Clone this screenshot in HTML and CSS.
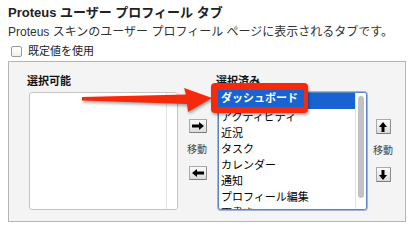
FILE: index.html
```html
<!DOCTYPE html>
<html lang="ja">
<head>
<meta charset="utf-8">
<title>Proteus ユーザー プロフィール タブ</title>
<link rel="stylesheet" href="styles.css">
</head>
<body>
<div class="page">
  <h2 class="title">Proteus ユーザー プロフィール タブ</h2>
  <p class="desc">Proteus スキンのユーザー プロフィール ページに表示されるタブです。</p>
  <label class="default-row"><input type="checkbox" class="chk"><span>既定値を使用</span></label>
  <div class="panel">
    <div class="col">
      <div class="col-label">選択可能</div>
      <div class="listbox">
        <div class="items"></div>
        <div class="track"></div>
      </div>
    </div>
    <div class="mover mover-lr">
      <button class="btn btn-wide" type="button"><svg width="12" height="8" viewBox="0 0 12 8"><polygon points="0,2.5 7,2.5 7,0 12,4 7,8 7,5.5 0,5.5" fill="#000"/></svg></button>
      <span class="move-label">移動</span>
      <button class="btn btn-wide btn-low" type="button"><svg width="12" height="8" viewBox="0 0 12 8"><polygon points="12,2.5 5,2.5 5,0 0,4 5,8 5,5.5 12,5.5" fill="#000"/></svg></button>
    </div>
    <div class="col col-sel">
      <div class="col-label">選択済み</div>
      <div class="listbox listbox-focus">
        <ul class="items">
          <li class="selected">ダッシュボード</li>
          <li>アクティビティ</li>
          <li>近況</li>
          <li>タスク</li>
          <li>カレンダー</li>
          <li>通知</li>
          <li>プロフィール編集</li>
          <li>下書き</li>
        </ul>
        <div class="track"><div class="thumb"></div></div>
      </div>
    </div>
    <div class="mover mover-ud">
      <button class="btn btn-narrow" type="button"><svg width="8" height="10" viewBox="0 0 8 10"><polygon points="4,0 8,5 5.5,5 5.5,10 2.5,10 2.5,5 0,5" fill="#000"/></svg></button>
      <span class="move-label">移動</span>
      <button class="btn btn-narrow btn-low" type="button"><svg width="8" height="10" viewBox="0 0 8 10"><polygon points="4,10 8,5 5.5,5 5.5,0 2.5,0 2.5,5 0,5" fill="#000"/></svg></button>
    </div>
  </div>
  <svg class="annot-arrow" width="136" height="32" viewBox="78 84 136 32">
    <polygon points="82,97 186,94.5 184,88 212,98 188,112 187,104 82,100.5" fill="#f52a0c"/>
  </svg>
  <div class="callout"><div class="callout-inner">ダッシュボード</div></div>
</div>
</body>
</html>
```

FILE: styles.css
```css
html, body {
  margin: 0;
  padding: 0;
  background: #fff;
}

.page {
  position: relative;
  width: 412px;
  height: 237px;
  box-sizing: border-box;
  padding: 4px 8px 0 8px;
  font-family: "Liberation Sans", "Noto Sans CJK JP", sans-serif;
  color: #222;
  overflow: hidden;
}

.title {
  margin: 0;
  font-size: 13px;
  font-weight: bold;
  line-height: 18px;
  color: #222;
}

.desc {
  margin: 1px 0 0 0;
  font-size: 12px;
  line-height: 19px;
  color: #333;
}

.default-row {
  display: flex;
  align-items: center;
  height: 13px;
  margin-top: 3px;
  padding-left: 3px;
  font-size: 11px;
  line-height: 13px;
  color: #222;
}

.chk {
  appearance: none;
  -webkit-appearance: none;
  width: 11px;
  height: 11px;
  margin: 0 6px 0 0;
  box-sizing: border-box;
  border: 1px solid #9a9a9a;
  border-radius: 2px;
  background: linear-gradient(#ffffff, #f0f0f0);
}

.panel {
  display: flex;
  align-items: flex-start;
  box-sizing: border-box;
  width: 398px;
  height: 161px;
  margin-top: 3px;
  padding: 12px 0 0 20px;
  border: 1px solid #b4b4b4;
  background: #f4f4f4;
}

.col {
  display: flex;
  flex-direction: column;
  width: 149px;
}

.col-sel {
  margin-left: 11px;
}

.col-label {
  margin-left: -2px;
  font-size: 11px;
  font-weight: bold;
  line-height: 14px;
  margin-bottom: 4px;
  color: #111;
}

.listbox {
  display: flex;
  box-sizing: border-box;
  height: 118px;
  border: 1px solid #c4c4c4;
  border-radius: 3px;
  background: #fff;
  overflow: hidden;
}

.listbox-focus {
  border-color: #5a84c2;
  box-shadow: 0 0 0 1px rgba(90, 132, 194, 0.55);
}

.items {
  flex: 1;
  margin: 0;
  padding: 0;
  list-style: none;
  overflow: hidden;
}

.items li {
  padding-left: 2px;
  font-size: 11px;
  line-height: 16px;
  height: 16px;
  white-space: nowrap;
  color: #000;
}

.items li.selected {
  background: #1862d2;
  color: #fff;
}

.track {
  width: 11px;
  box-sizing: border-box;
  border-left: 1px solid #e4e4e4;
  padding: 3px 3px 0 2px;
  background: #fff;
}

.thumb {
  width: 6px;
  height: 102px;
  border-radius: 3px;
  background: #c2c2c2;
}

.mover {
  display: flex;
  flex-direction: column;
  width: 20px;
  margin-top: 45px;
}

.mover-lr {
  margin-left: 9px;
}

.mover-ud {
  margin-left: 6px;
}

.btn {
  display: flex;
  align-items: center;
  justify-content: center;
  height: 14px;
  padding: 0;
  box-sizing: border-box;
  border: 1px solid #a8a8a8;
  border-bottom-color: #7c7c7c;
  border-right-color: #8c8c8c;
  border-radius: 1px;
  background: linear-gradient(#fbfbfb, #dcdcdc);
}

.btn-wide {
  width: 18px;
  align-self: flex-end;
}

.btn-narrow {
  width: 15px;
  height: 15px;
  align-self: center;
}

.btn-low {
  margin-top: 10px;
}

.move-label {
  margin-top: 11px;
  font-size: 10px;
  line-height: 12px;
  text-align: center;
  color: #444;
  white-space: nowrap;
}

.annot-arrow {
  position: absolute;
  left: 78px;
  top: 84px;
  filter: drop-shadow(1px 2px 1.5px rgba(0, 0, 0, 0.35));
}

.callout {
  position: absolute;
  left: 211px;
  top: 83px;
  width: 97px;
  height: 30px;
  box-sizing: border-box;
  padding: 7px 4px 6px 7px;
  border-radius: 4px;
  background: #f52a0c;
  box-shadow: 1px 2px 3px rgba(0, 0, 0, 0.35);
}

.callout-inner {
  height: 17px;
  padding-left: 3px;
  background: #1862d2;
  color: #fff;
  font-size: 11px;
  font-weight: bold;
  line-height: 17px;
  white-space: nowrap;
}
```
